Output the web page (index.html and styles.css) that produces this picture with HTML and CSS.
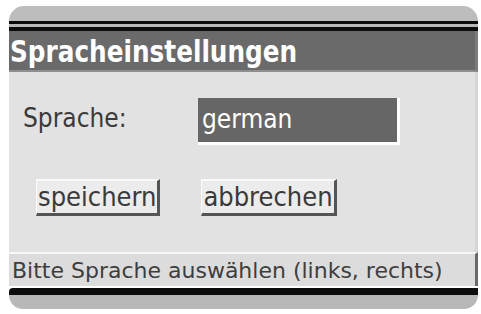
FILE: index.html
```html
<!DOCTYPE html>
<html lang="de">
<head>
<meta charset="utf-8">
<link rel="stylesheet" href="styles.css">
</head>
<body>
<div class="panel">
  <div class="top-cap"></div>
  <div class="rule rule-a"></div>
  <div class="rule-gap"></div>
  <div class="rule rule-b"></div>
  <div class="title"><span class="title-text">Spracheinstellungen</span></div>
  <div class="body">
    <div class="row">
      <span class="label">Sprache:</span>
      <span class="field">german</span>
    </div>
    <div class="buttons">
      <span class="btn btn-save">speichern</span>
      <span class="btn btn-cancel">abbrechen</span>
    </div>
  </div>
  <div class="status">Bitte Sprache auswählen (links, rechts)</div>
  <div class="rule rule-c"></div>
  <div class="bottom-cap"></div>
</div>
</body>
</html>
```
FILE: styles.css
```css
html, body {
  margin: 0;
  padding: 0;
  background: #ffffff;
}
body {
  width: 481px;
  height: 314px;
  overflow: hidden;
  font-family: "DejaVu Sans Condensed", "DejaVu Sans", "Liberation Sans", sans-serif;
}
.panel {
  margin: 6px 3px 0 9px;
  display: flex;
  flex-direction: column;
}
.top-cap {
  height: 15px;
  background: #bdbdbd;
  border-radius: 16px 16px 0 0;
}
.rule {
  background: #0c0c0c;
}
.rule-a { height: 3px; }
.rule-gap { height: 3px; background: #b8b8b8; }
.rule-b { height: 4px; }
.title {
  height: 39px;
  background: #6a6a6a;
  color: #ffffff;
  font-weight: bold;
  font-size: 27.5px;
  line-height: 40px;
  padding-left: 1px;
  border-right: 3px solid #7c7c7c;
  border-bottom: 2px solid #8e8e8e;
}
.title-text {
  display: inline-block;
  transform: scaleY(1.12);
  transform-origin: 0 60%;
}
.body {
  height: 180px;
  background: #e2e2e2;
  display: flex;
  flex-direction: column;
  border-right: 3px solid #d6d6d6;
}
.row {
  display: flex;
  align-items: center;
  margin-top: 26px;
}
.label {
  font-size: 26px;
  color: #3a3a3a;
  margin-left: 14px;
  width: 175px;
  margin-top: -8px;
}
.field {
  width: 202px;
  height: 47px;
  background: #666666;
  color: #ffffff;
  font-size: 26px;
  line-height: 42px;
  padding-left: 4px;
  box-sizing: border-box;
  border-right: 3px solid #ffffff;
  border-bottom: 3px solid #ffffff;
}
.buttons {
  display: flex;
  margin-top: 34px;
  margin-left: 27px;
  gap: 41px;
}
.btn {
  font-size: 27px;
  color: #3a3a3a;
  background: #ececec;
  line-height: 32px;
  padding: 0 1px;
  border-top: 2px solid #fbfbfb;
  border-left: 1px solid #fbfbfb;
  border-right: 3px solid #555555;
  border-bottom: 3px solid #555555;
}
.status {
  height: 32px;
  background: #dcdcdc;
  color: #3e3e3e;
  font-family: "DejaVu Sans", "Liberation Sans", sans-serif;
  font-size: 22px;
  line-height: 33px;
  padding-left: 3px;
  border-top: 2px solid #f8f8f8;
  border-right: 3px solid #6a6a6a;
}
.rule-c {
  height: 7px;
  margin-top: 2px;
  border-radius: 4px 0 0 0;
}
.bottom-cap {
  height: 14px;
  background: #b8b8b8;
  border-radius: 0 0 16px 16px;
}
```
